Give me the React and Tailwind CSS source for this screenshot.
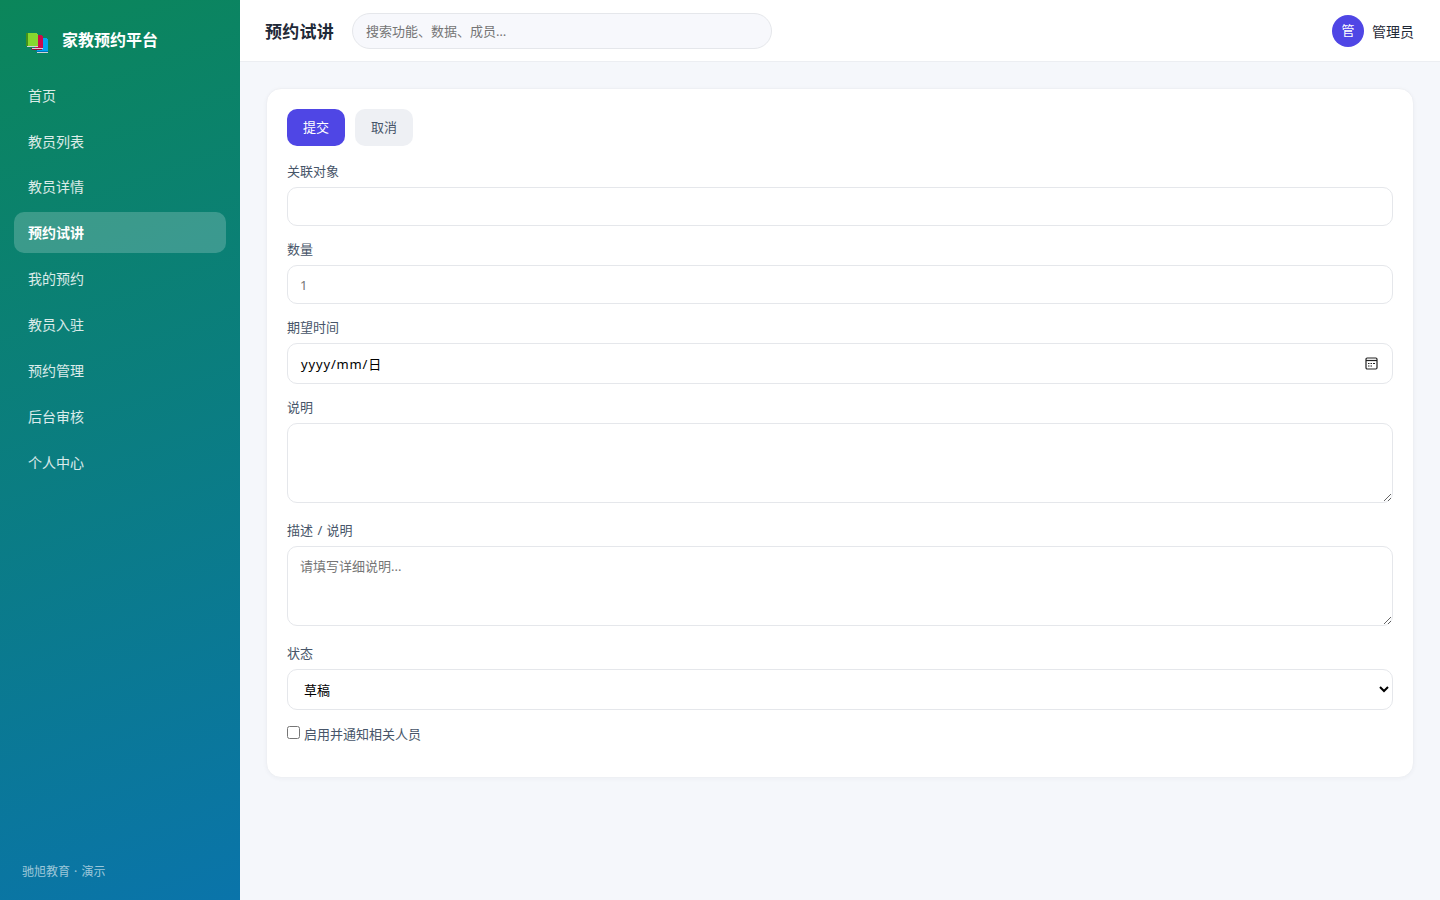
import React from "react";

const NAV_ITEMS = ["首页", "教员列表", "教员详情", "预约试讲", "我的预约", "教员入驻", "预约管理", "后台审核", "个人中心"];

const FIELD = "block w-full rounded-[10px] border border-[#e5e7eb] bg-white px-3 text-[13px] outline-none placeholder:text-[#757575]";

function BooksIcon() {
  return (
    <svg width="24" height="20" viewBox="0 0 24 20" shapeRendering="crispEdges" aria-hidden="true">
      <path d="M14 5h7v1h1v12H11v-2h3z" fill="#00a6ed" />
      <path d="M10 18h12v1H10z" fill="#0074ba" />
      <path d="M11 19h11v1H11z" fill="#d3d3d3" />
      <path d="M9 2h7v1h1v12H9z" fill="#ca0b4a" />
      <path d="M5 15h1v1h10v1H6v-1H5z" fill="#990838" />
      <path d="M6 15h11v1H6z" fill="#d3d3d3" />
      <path d="M0 0h2v13H0z" fill="#44911b" />
      <path d="M2 0h9v1h1v12H2z" fill="#86d72f" />
      <path d="M1 13h11v1H1z" fill="#d3d3d3" />
    </svg>
  );
}

function CalendarIcon() {
  return (
    <svg width="13" height="13" viewBox="0 0 13 13" fill="none" aria-hidden="true">
      <rect x="1" y="1" width="11" height="11" rx="1.2" stroke="#222" strokeWidth="1.2" />
      <path d="M1 3.5h11" stroke="#222" strokeWidth="1.2" />
      <path d="M5.5 6.5h1.5M8 6.5h2M3 6.5h1.5M3 9h1.5M5.5 9h1.5" stroke="#222" strokeWidth="1.1" />
    </svg>
  );
}

function Field({ label, children }) {
  return (
    <div className="flex flex-col gap-[6px]">
      <div className="h-[19px] text-[13px] leading-[19px] text-[#475569] [word-spacing:1px]">{label}</div>
      {children}
    </div>
  );
}

function Sidebar() {
  return (
    <aside className="flex h-full w-60 shrink-0 flex-col bg-[linear-gradient(160deg,#0b865a_0%,#0a74aa_100%)] px-[14px] pb-[18px] pt-5">
      <div className="mb-[14.7px] flex h-10 items-center gap-3 pl-3">
        <span className="flex pt-[6px]">
          <BooksIcon />
        </span>
        <span className="text-base font-bold leading-6 text-white">家教预约平台</span>
      </div>
      <nav className="flex flex-col gap-[4.9px]">
        {NAV_ITEMS.map((item) => (
          <a
            key={item}
            className={
              item === "预约试讲"
                ? "flex h-[41px] items-center rounded-[10px] bg-white/20 px-[14px] text-sm font-bold text-white"
                : "flex h-[41px] items-center rounded-[10px] px-[14px] pt-px text-sm text-white/85"
            }
          >
            {item}
          </a>
        ))}
      </nav>
      <div className="mt-auto pl-2 text-xs leading-5 text-white/60 [word-spacing:1px]">驰旭教育 · 演示</div>
    </aside>
  );
}

function Header() {
  return (
    <header className="flex h-[62px] shrink-0 items-center border-b border-[#eceef2] bg-white pl-[25px] pr-[26px]">
      <h1 className="mr-[18px] w-[69px] whitespace-nowrap pt-[2px] text-[17px] font-bold leading-6 tracking-[0.25px] text-[#1f2937]">预约试讲</h1>
      <input
        className="h-9 w-[420px] rounded-full border border-[#e5e7eb] bg-[#f7f8fc] px-[13px] text-[13px] outline-none placeholder:text-[#757575]"
        placeholder="搜索功能、数据、成员…"
      />
      <div className="ml-auto flex items-center gap-2">
        <span className="flex size-8 items-center justify-center rounded-full bg-[#4f46e5] text-[13px] text-white">管</span>
        <span className="pt-[2px] text-sm text-[#1f2937]">管理员</span>
      </div>
    </header>
  );
}

export default function App() {
  return (
    <div className="flex h-screen w-full overflow-hidden bg-[#f5f7fb] font-['Noto_Sans','Noto_Sans_CJK_SC',sans-serif]">
      <Sidebar />
      <div className="flex min-w-0 flex-1 flex-col">
        <Header />
        <main className="p-[26px]">
          <section className="h-[690px] rounded-[15px] border border-[#eef0f4] bg-white p-5 shadow-[0_1px_4px_rgba(30,41,80,0.04)]">
            <div className="mb-4 flex gap-[10px]">
              <button className="h-[37px] w-[58px] rounded-[10px] bg-[#4f46e5] text-[13px] text-white">提交</button>
              <button className="h-[37px] w-[58px] rounded-[10px] bg-[#eef0f4] text-[13px] text-[#475569]">取消</button>
            </div>
            <div className="flex flex-col gap-[14px]">
              <Field label="关联对象">
                <input className={`${FIELD} h-[39px]`} />
              </Field>
              <Field label="数量">
                <input className={`${FIELD} h-[39px]`} placeholder="1" />
              </Field>
              <Field label="期望时间">
                <div className="flex h-[41px] w-full items-center justify-between rounded-[10px] border border-[#e5e7eb] bg-white pl-[13px] pr-[14px] text-[13px] text-black">
                  <span className="pt-[2px] tracking-[0.85px]">yyyy/mm/日</span>
                  <CalendarIcon />
                </div>
              </Field>
              <Field label="说明">
                <textarea className={`${FIELD} mb-1 h-20 resize py-[9px] leading-5`} />
              </Field>
              <Field label="描述 / 说明">
                <textarea className={`${FIELD} mb-1 h-20 resize py-[9px] leading-5`} placeholder="请填写详细说明..." />
              </Field>
              <Field label="状态">
                <select className={`${FIELD} h-[41px] text-black`}>
                  <option>草稿</option>
                </select>
              </Field>
              <label className="flex h-5 items-center gap-1 text-[13px] leading-5 text-[#475569]">
                <input type="checkbox" className="mb-[3px] size-[13px]" />
                启用并通知相关人员
              </label>
            </div>
          </section>
        </main>
      </div>
    </div>
  );
}
